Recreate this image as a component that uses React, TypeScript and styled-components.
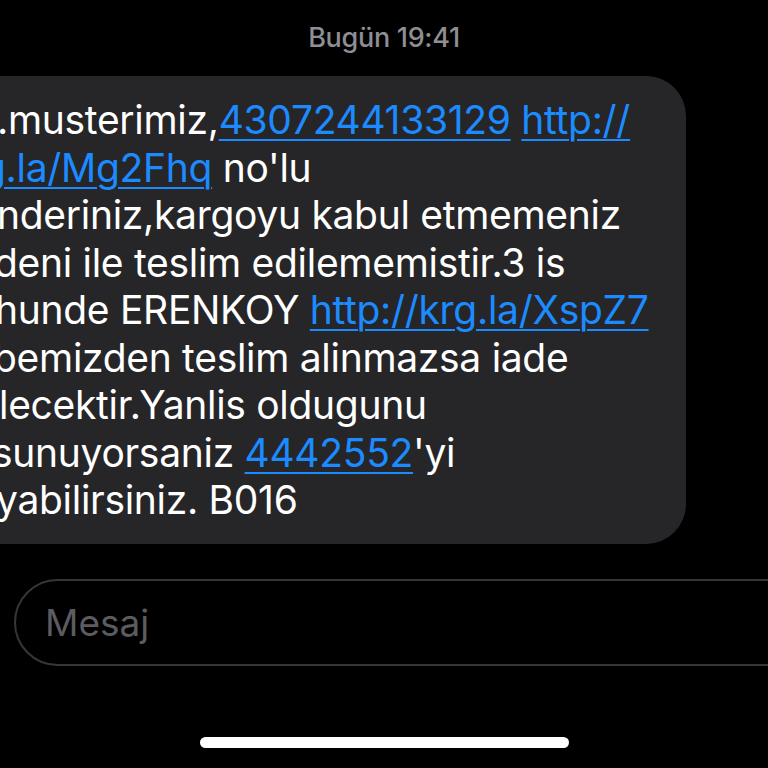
import React from "react";
import styled, { createGlobalStyle } from "styled-components";

const Global = createGlobalStyle`
  html, body {
    margin: 0;
    padding: 0;
    background: #000;
    overflow: hidden;
  }
  body {
    font-family: Inter, "Noto Sans", "Liberation Sans", sans-serif;
  }
`;

const Screen = styled.div`
  width: 768px;
  height: 768px;
  background: #000;
  display: flex;
  flex-direction: column;
  overflow: hidden;
`;

const Stamp = styled.div`
  padding-top: 23px;
  height: 76px;
  box-sizing: border-box;
  text-align: center;
  font-size: 27px;
  font-weight: 500;
  color: #8e8e93;
  line-height: 30px;
  letter-spacing: -0.3px;
`;

const Bubble = styled.div`
  margin-left: -40px;
  width: 726px;
  height: 468px;
  box-sizing: border-box;
  padding: 20px 0 0 40px;
  background: #262628;
  border-radius: 40px;
  color: #fff;
  font-size: 39px;
  line-height: 47.5px;
  letter-spacing: -0.3px;
`;

const Line = styled.div<{ $shift: number }>`
  white-space: nowrap;
  margin-left: ${(p) => p.$shift}px;
`;

const Link = styled.span`
  color: #1b8bff;
  text-decoration: underline;
  text-decoration-thickness: 2px;
  text-underline-offset: 5px;
`;

const Composer = styled.div`
  margin: 35px -60px 0 14px;
  height: 87px;
  box-sizing: border-box;
  border: 2px solid #363638;
  border-radius: 44px;
  display: flex;
  align-items: center;
  padding-left: 29px;
  font-size: 37px;
  color: #5c5c60;
`;

const HomeBar = styled.div`
  margin: 71px auto 0;
  width: 369px;
  height: 11px;
  border-radius: 6px;
  background: #fff;
`;

export default function App() {
  return (
    <>
      <Global />
      <Screen>
        <Stamp>Bugün 19:41</Stamp>
        <Bubble>
          <Line $shift={-3}>
            .musterimiz,<Link>4307244133129</Link> <Link>http://</Link>
          </Line>
          <Line $shift={-18}>
            <Link>g.la/Mg2Fhq</Link> no'lu
          </Line>
          <Line $shift={-3}>nderiniz,kargoyu kabul etmemeniz</Line>
          <Line $shift={-6}>deni ile teslim edilememistir.3 is</Line>
          <Line $shift={-5}>
            hunde ERENKOY <Link>http://krg.la/XspZ7</Link>
          </Line>
          <Line $shift={-7}>bemizden teslim alinmazsa iade</Line>
          <Line $shift={-1}>lecektir.Yanlis oldugunu</Line>
          <Line $shift={-8}>
            sunuyorsaniz <Link>4442552</Link>'yi
          </Line>
          <Line $shift={-4}>yabilirsiniz. B016</Line>
        </Bubble>
        <Composer>Mesaj</Composer>
        <HomeBar />
      </Screen>
    </>
  );
}
